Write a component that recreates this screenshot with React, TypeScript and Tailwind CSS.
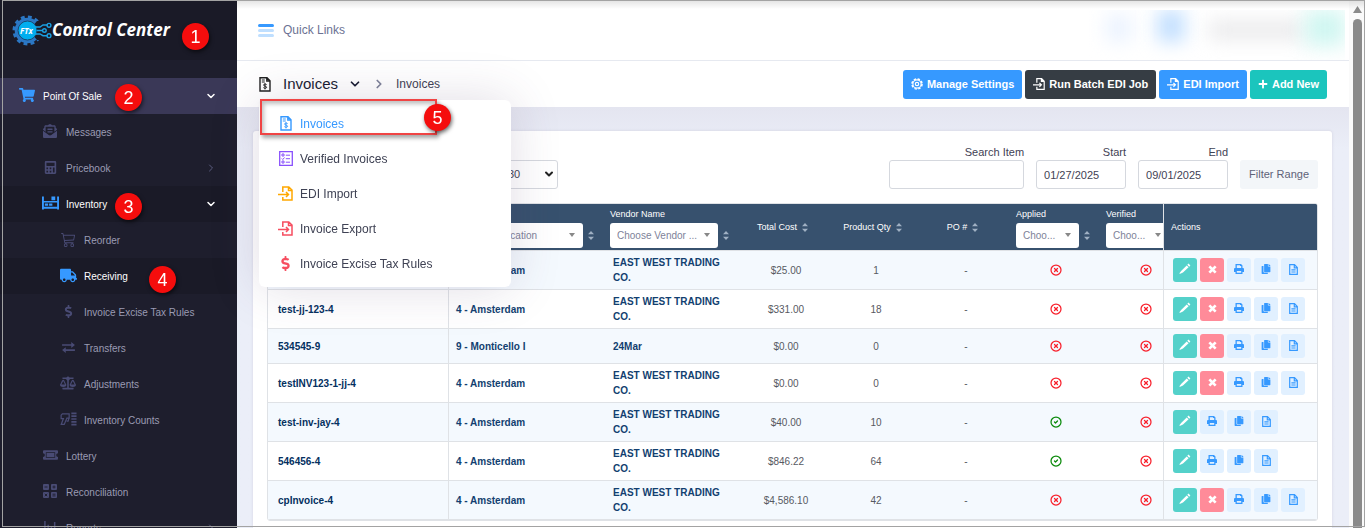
import React from 'react';
import {
  FaBalanceScale,
  FaCalculator,
  FaCopy,
  FaDollarSign,
  FaEnvelopeOpenText,
  FaPlus,
  FaShoppingCart,
  FaTruck,
} from 'react-icons/fa';
import { BsCart3 } from 'react-icons/bs';
import { ChevronDown, ChevronRight, CircleCheck, CircleX } from 'lucide-react';

type IconProps = { className?: string };

const ShelfIcon: React.FC<IconProps> = ({ className }) => (
  <svg viewBox="0 0 18 14" fill="currentColor" className={className}>
    <path d="M0 0h2v14H0zM16 0h2v14h-2zM2 5h14v1.5H2zM2 11h14v2H2zM10 0h4v4h-4zM3 7.500h3.500V10H3zM7.500 7.500H11V10H7.500z" />
  </svg>
);

const TransferIcon: React.FC<IconProps> = ({ className }) => (
  <svg viewBox="0 0 14 12" fill="currentColor" className={className}>
    <path d="M0 2.500h10V0l4 3.300-4 3.200V4.200H0zM14 8H4V5.600L0 8.800 4 12V9.700h10z" />
  </svg>
);

const ChartIcon: React.FC<IconProps> = ({ className }) => (
  <svg viewBox="0 0 14 14" fill="none" stroke="currentColor" strokeWidth="1.6" className={className}>
    <path d="M1 0v13h13M4.500 11V4M8 11V6M11.500 11V1" />
  </svg>
);

const ScannerIcon: React.FC<IconProps> = ({ className }) => (
  <svg viewBox="0 0 18 14" fill="none" stroke="currentColor" strokeWidth="1.3" className={className}>
    <path d="M2.500 1.500h7.200V6H7.300L4.500 12.800H1.300L3.600 6.500H1.200V3zM7 9.200h1.600L9.500 6" />
    <path d="M12 1h5.500M12 4h5.500M12 7h5.500M12 10h5.500M12 13h5.500" strokeWidth="1.7" />
  </svg>
);

const TicketIcon: React.FC<IconProps> = ({ className }) => (
  <svg viewBox="0 0 16 10" className={className}>
    <path
      fill="currentColor"
      fillRule="evenodd"
      d="M0 1a1 1 0 011-1h14a1 1 0 011 1v2a2 2 0 000 4v2a1 1 0 01-1 1H1a1 1 0 01-1-1V7a2 2 0 000-4zm3 1v6h10V2zm.8.8h8.400v4.400H3.800z"
    />
  </svg>
);

const MathGridIcon: React.FC<IconProps> = ({ className }) => (
  <svg viewBox="0 0 14 14" className={className}>
    <path
      fill="currentColor"
      d="M1 0h4a1 1 0 011 1v4a1 1 0 01-1 1H1a1 1 0 01-1-1V1a1 1 0 011-1zM9 0h4a1 1 0 011 1v4a1 1 0 01-1 1H9a1 1 0 01-1-1V1a1 1 0 011-1zM1 8h4a1 1 0 011 1v4a1 1 0 01-1 1H1a1 1 0 01-1-1V9a1 1 0 011-1zM9 8h4a1 1 0 011 1v4a1 1 0 01-1 1H9a1 1 0 01-1-1V9a1 1 0 011-1z"
    />
    <path
      stroke="#1e1e2d"
      strokeWidth=".9"
      d="M1.500 3h3M9.500 3h3M11 1.500v3M1.800 9.800l2.400 2.400M4.200 9.800l-2.400 2.400M9.500 10.200h3M9.500 11.900h3"
    />
  </svg>
);

const InvoiceIcon: React.FC<IconProps> = ({ className }) => (
  <svg viewBox="0 0 12 15" fill="none" stroke="currentColor" strokeWidth="1.4" className={className}>
    <path d="M1 .8h7L11 3.800V14H1zM7.800.8V4H11" />
    <path d="M2.800 3h3M2.800 5h3" strokeWidth="1" />
    <path d="M7.600 7.600c-.4-.8-3-.9-3 .4 0 1.500 3 .8 3 2.300 0 1.300-2.600 1.200-3.200.3M6 6.400v6" strokeWidth="1" />
  </svg>
);

const ChecklistIcon: React.FC<IconProps> = ({ className }) => (
  <svg viewBox="0 0 14 15" fill="none" stroke="currentColor" className={className}>
    <path d="M.7.7h12.600v13.600H.7z" strokeWidth="1.300" />
    <path d="M3 3h2v2H3zM3 10h2v2H3zM2.800 7.500l1 1L5.500 6.500M6.800 4.200H11M6.800 7.700H11M6.800 11.200H11" />
  </svg>
);

const FileInIcon: React.FC<IconProps> = ({ className }) => (
  <svg viewBox="0 0 15 15" fill="none" stroke="currentColor" strokeWidth="1.5" className={className}>
    <path d="M4.800 6V.9h6L14 4v10.100H4.800V11M10.500 1v3.400H14" />
    <path d="M0 8.500h10M8 6l2.500 2.500L8 11" />
  </svg>
);

const GearIcon: React.FC<IconProps> = ({ className }) => (
  <svg viewBox="0 0 12 12" fill="none" stroke="currentColor" className={className}>
    <circle cx="6" cy="6" r="5" strokeWidth="1.600" strokeDasharray="2.400 1.530" />
    <circle cx="6" cy="6" r="4.100" strokeWidth="1.100" />
    <circle cx="6" cy="6" r="1.700" strokeWidth="1.200" />
  </svg>
);

const PenIcon: React.FC<IconProps> = ({ className }) => (
  <svg viewBox="0 0 12 12" fill="currentColor" className={className}>
    <path d="M9.500.6l1.900 1.900-1.200 1.200-1.900-1.900zM7.700 2.400l1.900 1.900-5.600 5.300-2.700 1.200-.9-.1.200-.8 1.500-1.900z" />
  </svg>
);

const CrossIcon: React.FC<IconProps> = ({ className }) => (
  <svg viewBox="0 0 10 10" stroke="currentColor" strokeWidth="3" className={className}>
    <path d="M1.500 1.500l7 7M8.500 1.500l-7 7" />
  </svg>
);

const PrinterIcon: React.FC<IconProps> = ({ className }) => (
  <svg viewBox="0 0 10 10" className={className}>
    <path
      fill="currentColor"
      fillRule="evenodd"
      d="M1.500 0H7l1.500 1.500V4H9a1 1 0 011 1v3H8.500v2h-7V8H0V5a1 1 0 011-1h.5zM2.800 1.200V4h4.400V2H6V1.200zM2.800 7v1.800h4.400V7z"
    />
  </svg>
);

const DocIcon: React.FC<IconProps> = ({ className }) => (
  <svg viewBox="0 0 9 11" fill="none" stroke="currentColor" strokeWidth="1.2" className={className}>
    <path d="M.7.7h4.800L8.300 3.500v6.800H.7zM5.300.8v3h3M2.400 5.800h4.200M2.400 8h4.200" />
  </svg>
);

const SortIcon: React.FC = () => (
  <svg viewBox="0 0 6 9" className="h-[9px] w-[6px] shrink-0" fill="#9fb0c3">
    <path d="M3 0l3 3.200H0zM3 9L0 5.800h6z" />
  </svg>
);

const Logo: React.FC = () => (
  <svg viewBox="0 0 40 32" className="h-8 w-10 shrink-0">
    <circle cx="15.500" cy="16.500" r="13.400" fill="none" stroke="#2b77c4" strokeWidth="3.200" strokeDasharray="3.800 3.216" />
    <circle cx="15.500" cy="16.500" r="11" fill="none" stroke="#2b77c4" strokeWidth="3.600" />
    <path d="M22 10.500l3-3.500 15 0v19H25l-3-3.500z" fill="#1a1a27" />
    <circle cx="15.500" cy="16.500" r="9.500" fill="#00aeef" stroke="#1a3a5c" strokeWidth=".8" />
    <g fill="none" stroke="#1ba0e2" strokeWidth="1.400">
      <path d="M23 13h5l3-2h4M25 16.500h5.500M23 20h5l3 1.700h4" />
      <circle cx="37" cy="11.300" r="1.900" />
      <circle cx="32.400" cy="16.500" r="1.800" />
      <circle cx="37" cy="21.700" r="1.900" />
    </g>
    <text x="8" y="19.500" fill="#fff" fontSize="8" fontWeight="700" fontStyle="italic" fontFamily="Open Sans, sans-serif">
      FTx
    </text>
  </svg>
);

interface NavItem {
  label: string;
  icon: React.ComponentType<IconProps>;
  iconSize?: string;
  level: 0 | 1 | 2;
  state?: 'top' | 'active';
  arrow?: 'down' | 'right';
}

const navItems: NavItem[] = [
  { label: 'Point Of Sale', icon: FaShoppingCart, iconSize: 'h-4 w-4', level: 0, state: 'top', arrow: 'down' },
  { label: 'Messages', icon: FaEnvelopeOpenText, iconSize: 'h-[14px] w-[14px]', level: 1 },
  { label: 'Pricebook', icon: FaCalculator, iconSize: 'h-[13px] w-[13px]', level: 1, arrow: 'right' },
  { label: 'Inventory', icon: ShelfIcon, iconSize: 'h-[14px] w-[17px]', level: 1, state: 'active', arrow: 'down' },
  { label: 'Reorder', icon: BsCart3, iconSize: 'h-[15px] w-[15px]', level: 2 },
  { label: 'Receiving', icon: FaTruck, iconSize: 'h-[15px] w-[17px]', level: 2, state: 'active' },
  { label: 'Invoice Excise Tax Rules', icon: FaDollarSign, iconSize: 'h-[13px] w-[13px]', level: 2 },
  { label: 'Transfers', icon: TransferIcon, iconSize: 'h-[11px] w-[13px]', level: 2 },
  { label: 'Adjustments', icon: FaBalanceScale, iconSize: 'h-4 w-4', level: 2 },
  { label: 'Inventory Counts', icon: ScannerIcon, iconSize: 'h-[14px] w-[17px]', level: 2 },
  { label: 'Lottery', icon: TicketIcon, iconSize: 'h-[10px] w-[15px]', level: 1 },
  { label: 'Reconciliation', icon: MathGridIcon, iconSize: 'h-[14px] w-[14px]', level: 1 },
  { label: 'Reports', icon: ChartIcon, iconSize: 'h-[13px] w-[13px]', level: 1, arrow: 'right' },
];

const levelPadding = ['pl-[17px]', 'pl-10', 'pl-[58px]'];

const SidebarLink: React.FC<{ item: NavItem }> = ({ item }) => {
  const Icon = item.icon;
  const bg = item.state === 'top' ? 'bg-[#3a3857]' : item.state === 'active' ? 'bg-[#1a1a27]' : '';
  const text = item.state ? 'text-white' : 'text-[#9a9bb3]';
  const iconColor = item.state ? 'text-[#3699ff]' : 'text-[#494b74]';
  return (
    <a href="#" className={`flex h-9 shrink-0 items-center pr-5 text-[10px] ${levelPadding[item.level]} ${bg} ${text}`}>
      <span className={`flex w-5 shrink-0 justify-center pb-[2px] ${iconColor}`}>
        <Icon className={item.iconSize} />
      </span>
      <span className="ml-[6px] flex-1">{item.label}</span>
      {item.arrow === 'down' && <ChevronDown className="h-3 w-3" strokeWidth={3} />}
      {item.arrow === 'right' && <ChevronRight className="h-3 w-3 text-[#5c5e81]" strokeWidth={2} />}
    </a>
  );
};

const Sidebar: React.FC = () => (
  <aside className="flex w-[237px] shrink-0 flex-col overflow-hidden bg-[#1e1e2d]">
    <div className="flex h-[60px] shrink-0 items-center bg-[#1a1a27] pl-3">
      <Logo />
      <span className="whitespace-nowrap font-['Open_Sans',sans-serif] text-[17px] font-bold italic text-white">
        Control Center
      </span>
    </div>
    <nav className="flex flex-col pt-[18px]">
      {navItems.map((item) => (
        <SidebarLink key={item.label} item={item} />
      ))}
    </nav>
  </aside>
);

const menuItems = [
  { label: 'Invoices', icon: InvoiceIcon, color: 'text-[#3699ff]', size: 'h-[15px] w-3', selected: true },
  { label: 'Verified Invoices', icon: ChecklistIcon, color: 'text-[#8950fc]', size: 'h-[15px] w-[14px]' },
  { label: 'EDI Import', icon: FileInIcon, color: 'text-[#ffa800]', size: 'h-[15px] w-[15px]' },
  { label: 'Invoice Export', icon: FileInIcon, color: 'text-[#f64e60]', size: 'h-[15px] w-[15px]' },
  { label: 'Invoice Excise Tax Rules', icon: FaDollarSign, color: 'text-[#f64e60]', size: 'h-[15px] w-[15px]' },
];

const PageMenu: React.FC = () => (
  <div className="absolute left-[259px] top-[100px] z-20 w-[252px] rounded-md bg-white py-[6px] shadow-[0_0_50px_0_rgba(82,63,105,0.18)]">
    {menuItems.map((item) => (
      <a
        key={item.label}
        href="#"
        className={`flex h-[35px] items-center pl-[18px] text-xs ${item.selected ? 'text-[#3699ff]' : 'text-[#3f4254]'}`}
      >
        <span className={`flex w-[17px] justify-center ${item.color}`}>
          <item.icon className={item.size} />
        </span>
        <span className="ml-[6px]">{item.label}</span>
      </a>
    ))}
  </div>
);

const TopBar: React.FC = () => (
  <header className="flex h-[61px] shrink-0 items-center justify-between border-b border-[#e6e9f0] bg-white pl-[21px]">
    <button className="flex items-center gap-[9px] text-xs text-[#6c7293]">
      <span className="flex w-4 flex-col gap-[2px]">
        <span className="h-[3px] rounded-sm bg-[#3699ff]" />
        <span className="h-[3px] rounded-sm bg-[#bfdfff]" />
        <span className="h-[3px] rounded-sm bg-[#bfdfff]" />
      </span>
      Quick Links
    </button>
    <div className="mr-1 mt-[10px] flex h-[50px] w-[260px] items-start justify-end overflow-hidden">
      <span className="mt-1 h-7 w-7 bg-[#edf4ff] blur-[9px]" />
      <span className="ml-6 h-8 w-7 bg-[#c4e0ff] blur-[9px]" />
      <span className="ml-6 mt-3 h-4 w-24 bg-[#e6e6e8] blur-[10px]" />
      <span className="h-9 w-10 bg-[#cff6f1] blur-[10px]" />
    </div>
  </header>
);

const SubHeader: React.FC = () => (
  <div className="flex h-[46px] shrink-0 items-center justify-between bg-white pl-[22px] pr-[22px]">
    <div className="flex items-center">
      <InvoiceIcon className="h-[15px] w-3 text-[#212121]" />
      <button className="ml-3 flex items-center gap-[10px] text-[15px] text-[#181c32]">
        Invoices
        <ChevronDown className="h-[14px] w-[14px]" strokeWidth={3} />
      </button>
      <ChevronRight className="ml-[10px] h-[14px] w-[14px] text-[#7e8299]" strokeWidth={3} />
      <span className="ml-[10px] text-xs text-[#3f4254]">Invoices</span>
    </div>
    <div className="flex gap-[3px] text-[11px] font-bold text-white">
      <button className="flex h-[29px] items-center gap-1 rounded-[3px] bg-[#3699ff] px-2">
        <GearIcon className="h-3 w-3" />
        Manage Settings
      </button>
      <button className="flex h-[29px] items-center gap-1 rounded-[3px] bg-[#363d44] px-2">
        <FileInIcon className="h-3 w-3" />
        Run Batch EDI Job
      </button>
      <button className="flex h-[29px] items-center gap-1 rounded-[3px] bg-[#3699ff] px-2">
        <FileInIcon className="h-3 w-3" />
        EDI Import
      </button>
      <button className="flex h-[29px] items-center gap-1 rounded-[3px] bg-[#1bc5bd] px-2">
        <FaPlus className="h-[10px] w-[10px]" />
        Add New
      </button>
    </div>
  </div>
);

const inputClass = 'h-[29px] rounded-[3px] border border-[#d5d8de] bg-white px-[7px] text-[11px] text-[#3f4254]';

const Toolbar: React.FC = () => (
  <div className="flex items-end">
    <div className="relative ml-[231px]">
      <select aria-label="Rows" className={`${inputClass} w-[60px] appearance-none pl-[9px]`}>
        <option>30</option>
      </select>
      <ChevronDown className="pointer-events-none absolute right-[3px] top-[8px] h-3 w-3 text-[#222]" strokeWidth={4} />
    </div>
    <div className="ml-auto flex items-end gap-3 text-[11px] leading-[15px] text-[#3f4254]">
      <label className="flex w-[135px] flex-col text-right">
        Search Item
        <input type="text" className={inputClass} />
      </label>
      <label className="flex w-[90px] flex-col text-right">
        Start
        <input type="text" defaultValue="01/27/2025" className={inputClass} />
      </label>
      <label className="flex w-[90px] flex-col text-right">
        End
        <input type="text" defaultValue="09/01/2025" className={inputClass} />
      </label>
      <button className="h-[29px] rounded-[3px] bg-[#f3f6f9] px-[9px] text-[#5e6278]">Filter Range</button>
    </div>
  </div>
);

const HeaderSelect: React.FC<{ label: string; text: string; hideLabel?: boolean }> = ({ label, text, hideLabel }) => (
  <div className="flex items-end gap-[5px]">
    <label className="min-w-0 flex-1">
      <span className={`block leading-[17px] ${hideLabel ? 'invisible' : ''}`}>{label}</span>
      <span className="relative block">
        <select className="h-[25px] w-full appearance-none rounded-[3px] bg-white pl-[7px] text-[10px] text-[#7e8299]">
          <option>{text}</option>
        </select>
        <svg viewBox="0 0 6 4" className="pointer-events-none absolute right-2 top-[10px] h-1 w-[6px]" fill="#888">
          <path d="M0 0h6L3 4z" />
        </svg>
      </span>
    </label>
    <span className="pb-[8px]">
      <SortIcon />
    </span>
  </div>
);

const SortHeader: React.FC<{ label: string }> = ({ label }) => (
  <div className="flex items-center justify-center gap-[5px] pr-[7px]">
    {label}
    <SortIcon />
  </div>
);

interface Invoice {
  number: string;
  location: string;
  vendor: string;
  cost: string;
  qty: number;
  applied: boolean;
}

const invoices: Invoice[] = [
  { number: '', location: '4 - Amsterdam', vendor: 'EAST WEST TRADING CO.', cost: '$25.00', qty: 1, applied: false },
  { number: 'test-jj-123-4', location: '4 - Amsterdam', vendor: 'EAST WEST TRADING CO.', cost: '$331.00', qty: 18, applied: false },
  { number: '534545-9', location: '9 - Monticello I', vendor: '24Mar', cost: '$0.00', qty: 0, applied: false },
  { number: 'testINV123-1-jj-4', location: '4 - Amsterdam', vendor: 'EAST WEST TRADING CO.', cost: '$0.00', qty: 0, applied: false },
  { number: 'test-inv-jay-4', location: '4 - Amsterdam', vendor: 'EAST WEST TRADING CO.', cost: '$40.00', qty: 10, applied: true },
  { number: '546456-4', location: '4 - Amsterdam', vendor: 'EAST WEST TRADING CO.', cost: '$846.22', qty: 64, applied: true },
  { number: 'cpInvoice-4', location: '4 - Amsterdam', vendor: 'EAST WEST TRADING CO.', cost: '$4,586.10', qty: 42, applied: false },
];

const StatusIcon: React.FC<{ ok: boolean }> = ({ ok }) =>
  ok ? (
    <CircleCheck className="mx-auto h-3 w-3 text-[#0a8a0a]" strokeWidth={2.5} />
  ) : (
    <CircleX className="mx-auto h-3 w-3 text-[#f8202c]" strokeWidth={2.5} />
  );

const actionClass = 'flex h-6 w-6 items-center justify-center rounded-[3px] pb-[2px]';

const RowActions: React.FC<{ deletable: boolean }> = ({ deletable }) => (
  <div className="flex gap-[3px]">
    <button aria-label="Edit" className={`${actionClass} bg-[#54d1ca] text-white`}>
      <PenIcon className="h-3 w-3" />
    </button>
    {deletable && (
      <button aria-label="Delete" className={`${actionClass} bg-[#ff8b99] text-white`}>
        <CrossIcon className="h-[9px] w-[9px]" />
      </button>
    )}
    <button aria-label="Print" className={`${actionClass} bg-[#e1f0ff] text-[#3699ff]`}>
      <PrinterIcon className="h-[10px] w-[10px]" />
    </button>
    <button aria-label="Copy" className={`${actionClass} bg-[#e1f0ff] text-[#3699ff]`}>
      <FaCopy className="h-[10px] w-[10px]" />
    </button>
    <button aria-label="Details" className={`${actionClass} bg-[#e1f0ff] text-[#3699ff]`}>
      <DocIcon className="h-[11px] w-[9px]" />
    </button>
  </div>
);

const InvoiceTable: React.FC = () => (
  <div className="overflow-hidden rounded-[3px] border border-[#dfe2e6]">
    {/* the table is wider than its box, the actions column stays pinned on the right */}
    <table className="w-[calc(100%+28px)] table-fixed border-separate border-spacing-0 text-[10px] leading-[15px]">
      <colgroup>
        <col />
        <col className="w-[154px]" />
        <col className="w-[138px]" />
        <col className="w-[90px]" />
        <col className="w-[90px]" />
        <col className="w-[90px]" />
        <col className="w-[90px]" />
        <col className="w-[90px]" />
        <col className="w-[154px]" />
      </colgroup>
      <thead>
        <tr className="h-[47px] bg-[#37516e] text-left text-[9px] text-white [&>th]:border-b [&>th]:border-[#dfe2e6] [&>th]:p-0 [&>th]:font-normal">
          <th />
          <th>
            <div className="pl-[6px] pr-[9px]">
              <HeaderSelect label="Location" text="Choose Location" hideLabel />
            </div>
          </th>
          <th>
            <div className="pl-[7px] pr-3">
              <HeaderSelect label="Vendor Name" text="Choose Vendor ..." />
            </div>
          </th>
          <th><SortHeader label="Total Cost" /></th>
          <th><SortHeader label="Product Qty" /></th>
          <th><SortHeader label="PO #" /></th>
          <th>
            <div className="pl-[5px] pr-[11px]">
              <HeaderSelect label="Applied" text="Choo..." />
            </div>
          </th>
          <th>
            <div className="pl-[5px] pr-[11px]">
              <HeaderSelect label="Verified" text="Choo..." />
            </div>
          </th>
          <th className="sticky right-0 border-l bg-[#37516e]">
            <span className="pl-[7px]">Actions</span>
          </th>
        </tr>
      </thead>
      <tbody>
        {invoices.map((invoice, i) => (
          <tr
            key={i}
            className={`text-center text-[#575962] [&>td]:border-b [&>td]:border-[#dfe2e6] [&>td]:p-0 ${i % 2 === 0 ? 'bg-[#f4f9fe]' : 'bg-white'}`}
          >
            <td className="border-r text-left font-bold text-[#04305f]">
              <a href="#" className="pl-[10px]">{invoice.number}</a>
            </td>
            <td className="text-left font-bold text-[#123f70]">
              <span className="pl-[7px]">{invoice.location}</span>
            </td>
            <td className="text-left font-bold text-[#123f70]">
              <div className="py-1 pl-[10px] pr-2">{invoice.vendor}</div>
            </td>
            <td>{invoice.cost}</td>
            <td>{invoice.qty}</td>
            <td>-</td>
            <td><StatusIcon ok={invoice.applied} /></td>
            <td><StatusIcon ok={false} /></td>
            <td className={`sticky right-0 border-l ${i % 2 === 0 ? 'bg-[#f4f9fe]' : 'bg-white'}`}>
              <div className="py-[5px] pl-[9px]">
                <RowActions deletable={!invoice.applied} />
              </div>
            </td>
          </tr>
        ))}
      </tbody>
    </table>
  </div>
);

const ScrollBar: React.FC = () => (
  <div className="flex w-4 shrink-0 flex-col items-center bg-[#fafafa] pt-[6px]">
    <svg viewBox="0 0 9 7" className="h-[7px] w-[9px]" fill="#8a8a8a">
      <path d="M4.500 0L9 7H0z" />
    </svg>
    <div className="mt-[6px] w-[9px] flex-1 rounded-t-full bg-[#8a8a8a]" />
  </div>
);

// Numbered steps that sit on top of the page
const steps = [
  { n: 1, place: 'left-[182px] top-[23px]' },
  { n: 2, place: 'left-[115px] top-[84px]' },
  { n: 3, place: 'left-[115px] top-[193px]' },
  { n: 4, place: 'left-[149px] top-[266px]' },
  { n: 5, place: 'left-[424px] top-[104px]' },
];

const Steps: React.FC = () => (
  <>
    <div className="pointer-events-none absolute left-[260px] top-[99px] z-30 h-9 w-[177px] border-2 border-[#f04444] shadow-[2px_3px_4px_rgba(0,0,0,0.35),inset_2px_3px_4px_rgba(0,0,0,0.25)]" />
    {steps.map((step) => (
      <span
        key={step.n}
        className={`absolute z-40 flex h-[27px] w-[27px] items-center justify-center rounded-full bg-[#f50d0d] text-lg text-white shadow-[1px_2px_4px_rgba(0,0,0,0.6)] ${step.place}`}
      >
        {step.n}
      </span>
    ))}
  </>
);

const App: React.FC = () => (
  <div className="relative flex h-screen overflow-hidden bg-white font-['Liberation_Sans',Arial,sans-serif]">
    <Sidebar />
    <main className="flex min-w-0 flex-1 flex-col bg-[#ebedf7]">
      <TopBar />
      <SubHeader />
      <div className="min-h-0 flex-1 bg-linear-to-b from-[#e4e5f0] to-[#ebeef8] to-10% px-4 pr-[17px] pt-6">
        <div className="h-full rounded-t-[3px] bg-white px-[14px] pt-[14px] shadow-[0_0_3px_rgba(82,63,105,0.15)]">
          <Toolbar />
          <div className="mt-[14px]">
            <InvoiceTable />
          </div>
        </div>
      </div>
    </main>
    <ScrollBar />
    <PageMenu />
    <Steps />
    <div className="pointer-events-none absolute bottom-px left-[2px] right-0 top-0 z-50 border border-[#a3a3a3]" />
    <div className="pointer-events-none absolute left-[237px] right-0 top-px z-10 h-2 bg-linear-to-b from-black/10 to-transparent" />
  </div>
);

export default App;
